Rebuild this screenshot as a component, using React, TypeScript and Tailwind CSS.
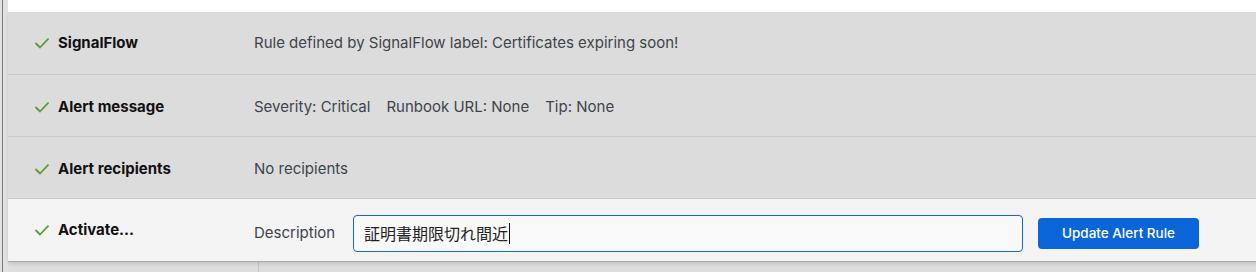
import React from "react";

function Check() {
  return (
    <svg width="14" height="11" viewBox="0 0 14 11" fill="none" className="shrink-0">
      <path d="M1 5.5 L5 9.5 L13 1.2" stroke="#5b9e2d" strokeWidth="1.8" strokeLinecap="round" strokeLinejoin="round" />
    </svg>
  );
}

function Row({
  label,
  children,
  light,
  last,
  first,
}: {
  label: string;
  children: React.ReactNode;
  light?: boolean;
  last?: boolean;
  first?: boolean;
}) {
  return (
    <div
      className={`flex ${first ? "h-[63px] pt-[1px]" : "h-[62px]"} ${
        !first && !last ? "pt-[3px]" : ""
      } items-center ${light ? "bg-[#f4f4f4]" : "bg-[#dcdcdc]"} ${last ? "" : "border-b border-[#c9c9c9]"}`}
    >
      <div className="flex w-[246px] shrink-0 items-center gap-[9px] pl-[27px]">
        <Check />
        <span className="text-[15px] font-bold text-[#111111]">{label}</span>
      </div>
      <div className={`flex flex-1 items-center text-[15px] text-[#3c444d] ${last ? "pt-[6px]" : ""}`}>{children}</div>
    </div>
  );
}

export default function App() {
  return (
    <div
      className="relative flex h-[272px] w-[1256px] overflow-hidden bg-[#dedede]"
      style={{ fontFamily: "Inter, 'Noto Sans', sans-serif" }}
    >
      <div className="flex w-[8px] shrink-0 bg-[#e2e2e2]">
        <div className="ml-[2px] h-full w-[1px] bg-[#7a7a7a]" />
      </div>
      <div className="flex flex-1 flex-col">
        <div className="h-[12px] shrink-0 bg-white" />
        <div className="relative z-10 w-[1260px] border-b border-[#ababab] shadow-[0_2px_4px_rgba(0,0,0,0.12)]">
          <Row label="SignalFlow" first>Rule defined by SignalFlow label: Certificates expiring soon!</Row>
          <Row label="Alert message">
            <span>Severity: Critical</span>
            <span className="ml-[16px]">Runbook URL: None</span>
            <span className="ml-[16px]">Tip: None</span>
          </Row>
          <Row label="Alert recipients">No recipients</Row>
          <Row label="Activate..." light last>
            <span className="w-[99px] shrink-0">Description</span>
            <div className="flex h-[37px] w-[670px] items-center rounded-[4px] border border-[#1769d6] bg-[#f9f9f9] pl-[10px] text-[16px] text-[#222222]">
              <span style={{ fontFamily: "'Noto Sans CJK JP', 'Noto Sans', sans-serif" }}>証明書期限切れ間近</span>
              <span className="ml-[1px] h-[21px] w-[1px] bg-[#111111]" />
            </div>
            <button className="ml-[15px] h-[31px] w-[161px] rounded-[4px] bg-[#0a65d8] text-[13.5px] font-medium text-white">
              Update Alert Rule
            </button>
          </Row>
        </div>
        <div className="flex flex-1">
          <div className="ml-[250px] h-full w-[1px] bg-[#c4c4c4]" />
        </div>
      </div>
    </div>
  );
}
